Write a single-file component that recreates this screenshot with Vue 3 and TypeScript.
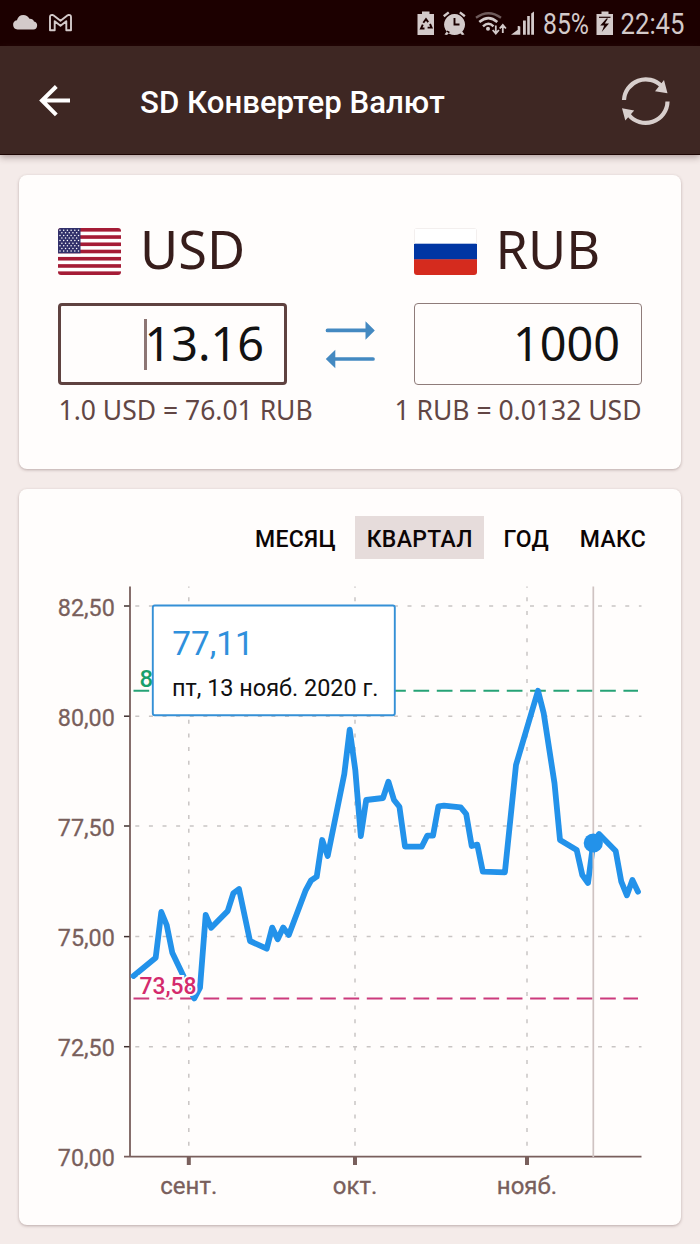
<script setup lang="ts">
interface Point {
  x: number
  y: number
}

const rates: [number, number][] = [
  [133.5, 976], [155.7, 957.7], [161.3, 912], [166.7, 925], [172.3, 952.7], [183.3, 975.7],
  [194.3, 998.5], [200, 987.7], [205.7, 915], [211.2, 927.8], [227.7, 911], [233.3, 893.3],
  [239, 889], [250, 941], [266.7, 948.7], [272.2, 927.6], [277.7, 939.3], [283.2, 927.6],
  [288.8, 935], [305.5, 890.7], [311, 880.5], [316.7, 876.7], [322.2, 840], [327.7, 856],
  [344.3, 774], [349.7, 729.7], [355.3, 770], [360.8, 836], [366.2, 800], [383, 798],
  [388.4, 781.7], [394, 800], [399.4, 806.7], [405, 846.7], [421.7, 846.7], [427.2, 835.7],
  [433, 835.7], [438.4, 806.3], [444, 805.6], [460.7, 807.3], [466.2, 814], [471.7, 846],
  [477.3, 844.6], [482.8, 871.7], [504.9, 872.3], [516, 765], [538, 690.7], [543.7, 713.3],
  [554.5, 783.3], [560, 840], [576.7, 850], [582.3, 875], [588, 883], [593.3, 843],
  [599, 834], [615.7, 851], [621.3, 881.7], [626.9, 895.3], [632.4, 880], [638, 891.7],
]
const linePoints = rates.map(([x, y]) => `${x},${y}`).join(' ')

const yTicks = [
  { label: '82,50', y: 606 },
  { label: '80,00', y: 716.2 },
  { label: '77,50', y: 826 },
  { label: '75,00', y: 936.6 },
  { label: '72,50', y: 1046.7 },
  { label: '70,00', y: 1156.7 },
]
const xTicks = [
  { label: 'сент.', x: 188.8 },
  { label: 'окт.', x: 355 },
  { label: 'нояб.', x: 527 },
]
const periods = [
  { label: 'МЕСЯЦ', cls: 'month' },
  { label: 'КВАРТАЛ', cls: 'quarter' },
  { label: 'ГОД', cls: 'year' },
  { label: 'МАКС', cls: 'max' },
]
const activePeriod = 'quarter'

const stripes = [0, 1, 2, 3, 4, 5, 6]
const stars: Point[] = []
for (let row = 0; row < 9; row++) {
  const count = row % 2 === 0 ? 6 : 5
  for (let i = 0; i < count; i++) {
    stars.push({ x: (row % 2 === 0 ? 2 : 3.85) + i * 3.7, y: 2.2 + row * 2.6 })
  }
}
</script>

<template>
  <div class="screen">
    <div class="status">
      <svg class="status-left" width="90" height="46" viewBox="0 0 90 46">
        <path d="M17.500 29.500a4.700 4.700 0 0 1-.6-9.300Q18.500 15 23.300 15Q27.500 15 29.500 18.800Q33 18.600 34 21.600a4 4 0 0 1-.6 7.900z" fill="#d3caca" />
        <path
          d="M50 17.200Q50 14.800 52.200 14.900L54 15.700L60.500 20.800L67 15.700L68.800 14.900Q71 14.800 71 17.200V30.300H66.300V21.200L60.500 25.700L54.700 21.200V30.300H50Z"
          fill="none" stroke="#d3caca" stroke-width="1.900" stroke-linejoin="round"
        />
      </svg>
      <svg class="status-right" width="290" height="46" viewBox="410 0 290 46">
        <g fill="#d3caca">
          <path d="M418 14h4v-2.500h7.500V14h4.500v21h-16.500V14z" />
          <path d="M454.500 14.100a10.500 10.500 0 1 0 .1 0zM443 15.200l5-3.700 1.500 1.800-5 4zM465.600 15.200l-5-3.700-1.500 1.800 5 4zM444.500 34.500l3-4 2.500 1.500-3 3zM464.500 34.500l-3-4-2.500 1.500 3 3z" />
          <circle cx="488" cy="28.700" r="2" />
          <path d="M511 34.700l7.500-5.500v5.500zM517.700 26h1.800v8.700h-1.800zM518.300 26.500h2v8.200h-2zM523 20.500h2.800v14.200h-2.800zM527.200 16h2.600v18.700h-2.600zM531.200 13.500l2.800-2v23.200h-2.800z" />
          <path d="M597 14h4.500v-2.500h7V14h4.500v21h-16.500V14z" />
        </g>
        <g fill="none" stroke="#1c0000" stroke-width="1.900">
          <path d="M454.500 18v6.500h5" />
          <path d="M423.300 22.800l2.700-3.600 2.200 2.900M430 24l1.600 3.600h-4M424.500 28.500h-3.500l1.800-3.800" />
          <path d="M599 17.300h11.500" stroke-width="1.200" />
        </g>
        <path d="M606.500 18.500l-6.300 7h4l-2.500 6.500 7.300-8.500h-4.200l3.200-5z" fill="#1c0000" />
        <g fill="none" stroke="#d3caca" stroke-width="2.500">
          <path d="M476 17.700q12.500-9 25 0" stroke="#6f5b5b" stroke-width="2.300" />
          <path d="M479.300 22q9.200-7.800 18 0" />
          <path d="M483 26.300q5.500-5 10.500 0" />
          <path d="M495.800 25.500v8M492.700 30l3.100 3.600 3.100-3.600M502.800 33v-8M499.700 28.500l3.100-3.600 3.100 3.600" stroke-width="1.800" />
        </g>
        <g class="status-text">
          <text x="543" y="34.300" textLength="46" lengthAdjust="spacingAndGlyphs">85%</text>
          <text x="620.500" y="34.300" textLength="64" lengthAdjust="spacingAndGlyphs">22:45</text>
        </g>
      </svg>
    </div>

    <header class="appbar">
      <svg class="back" width="34" height="34" viewBox="38 83.500 34 34">
        <path d="M70 101H42M56.300 87L42 101L56.300 115.300" fill="none" stroke="#fff" stroke-width="4" />
      </svg>
      <h1 class="title">SD Конвертер Валют</h1>
      <svg class="refresh" width="52" height="52" viewBox="620 74.500 52 52">
        <g fill="none" stroke="#d8cfcd" stroke-width="4.200">
          <path d="M624 100.500A21.800 21.800 0 0 1 661.500 86.500" />
          <path d="M667.500 102A21.800 21.800 0 0 1 628.500 115" />
        </g>
        <path d="M664 80.500L667.500 93.800L655 91.700zM622 108.700L634.200 111L625.300 121z" fill="#d8cfcd" />
      </svg>
    </header>

    <main class="content">
      <section class="card converter">
        <div class="fields">
          <div class="currency">
            <div class="name">
              <svg class="flag" width="63" height="47" viewBox="0 0 63 47">
                <rect width="63" height="47" fill="#fff" />
                <rect v-for="i in stripes" :key="i" x="0" :y="i * 7.230" width="63" height="3.620" fill="#a51c36" />
                <rect width="22.500" height="25.300" fill="#32316b" />
                <circle v-for="(s, i) in stars" :key="i" :cx="s.x" :cy="s.y" r="0.750" fill="#fff" />
              </svg>
              <span class="code">USD</span>
            </div>
            <div class="amount focused"><span class="caret"></span><span>13.16</span></div>
          </div>
          <svg class="swap" width="52" height="50" viewBox="324.500 320 52 50">
            <g stroke="#4489c1" stroke-width="3.700" stroke-linecap="round">
              <path d="M328 330.400H367M335 359H373.500" />
            </g>
            <path d="M366 321.300L375.300 330.400L366 339.700zM335.800 349.700L326.300 359L335.800 368.200z" fill="#4489c1" />
          </svg>
          <div class="currency">
            <div class="name">
              <svg class="flag" width="63" height="47" viewBox="0 0 63 47">
                <rect width="63" height="47" fill="#fff" />
                <rect y="15.700" width="63" height="16" fill="#0036a3" />
                <rect y="31.300" width="63" height="15.700" fill="#d52b1e" />
                <path d="M.5 15.700V.5H62.500V15.700" fill="none" stroke="#f3efee" />
              </svg>
              <span class="code">RUB</span>
            </div>
            <div class="amount"><span>1000</span></div>
          </div>
        </div>
        <div class="rates">
          <span>1.0 USD = 76.01 RUB</span>
          <span>1 RUB = 0.0132 USD</span>
        </div>
      </section>

      <section class="card history">
        <nav class="tabs">
          <button v-for="p in periods" :key="p.cls" class="tab" :class="[p.cls, { active: p.cls === activePeriod }]">
            {{ p.label }}
          </button>
        </nav>
        <svg class="chart" width="662" height="655" viewBox="19 570 662 655">
          <g stroke="#c9c5c4" stroke-width="1.500" fill="none">
            <path v-for="t in yTicks.slice(0, 5)" :key="t.y" :d="`M135.300 ${t.y}H641.500`" stroke-dasharray="4 9.610" />
            <path v-for="t in xTicks" :key="t.x" :d="`M${t.x} 586.500V1150`" stroke-dasharray="4 9.610" stroke-dashoffset="2.800" />
          </g>
          <g stroke="#795f5c" fill="none">
            <path d="M130 586.500V1157M124 1156.700H641.500" stroke-width="1.800" />
            <path v-for="t in xTicks" :key="t.x" :d="`M${t.x} 1156V1165`" stroke-width="4" />
          </g>
          <path v-for="t in yTicks.slice(0, 5)" :key="t.y" :d="`M124 ${t.y}H129.500`" stroke="#3f302f" stroke-width="1.500" />
          <g class="axis-label">
            <text v-for="t in yTicks" :key="t.y" x="114.800" :y="t.y + 9.600" text-anchor="end" textLength="57" lengthAdjust="spacingAndGlyphs">{{ t.label }}</text>
            <text v-for="t in xTicks" :key="t.x" :x="t.x" y="1193.500" text-anchor="middle">{{ t.label }}</text>
          </g>
          <path d="M133.500 690.700H638" stroke="#26a276" stroke-width="2" stroke-dasharray="15.700 7.630" />
          <path d="M133.500 998.400H638" stroke="#cc3a7c" stroke-width="2" stroke-dasharray="15.700 7.630" />
          <polyline :points="linePoints" fill="none" stroke="#2392ea" stroke-width="5.800" stroke-linecap="round" stroke-linejoin="round" />
          <path d="M593.300 586.500V1157" stroke="#cfc3c2" stroke-width="1.700" />
          <circle cx="593.300" cy="843" r="9.600" fill="#2392ea" />
          <text class="bound high" x="139.500" y="686.500">8</text>
          <text class="bound low" x="139.500" y="994" textLength="57" lengthAdjust="spacingAndGlyphs">73,58</text>
          <rect x="152.800" y="605.500" width="242" height="109.800" rx="2" fill="#fff" stroke="#3590d6" stroke-width="1.900" />
          <text class="tip-value" x="172.300" y="654.500" textLength="81.500" lengthAdjust="spacingAndGlyphs">77,11</text>
          <text class="tip-date" x="172" y="695.700" textLength="206.500" lengthAdjust="spacingAndGlyphs">пт, 13 нояб. 2020 г.</text>
        </svg>
      </section>
    </main>
  </div>
</template>

<style>
body {
  background: #f4ebe9;
}
</style>

<style scoped>
.screen {
  width: 700px;
  height: 1244px;
  overflow: hidden;
  background: #f4ebe9;
  font-family: Roboto, "Liberation Sans", sans-serif;
}
.status {
  display: flex;
  justify-content: space-between;
  height: 46px;
  background: #1c0000;
}
.status-text {
  font: 400 29px Roboto, sans-serif;
  fill: #d3caca;
}
.appbar {
  display: flex;
  align-items: center;
  box-sizing: border-box;
  height: 109px;
  padding: 0 28px 0 38px;
  background: #3e2723;
  border-bottom: 1px solid #1d0503;
  box-shadow: 0 2px 7px rgba(60, 30, 30, 0.4);
}
.title {
  flex: 1;
  margin: 5px 0 0 68px;
  font-size: 31.200px;
  line-height: 40px;
  font-weight: 500;
  color: #fff;
  white-space: nowrap;
}
.content {
  display: flex;
  flex-direction: column;
  gap: 20px;
  padding: 20px 19px 19px;
}
.card {
  box-sizing: border-box;
  border-radius: 8px;
  background: #fffdfc;
  box-shadow: 0 1px 3px rgba(80, 50, 50, 0.35);
}
.converter {
  height: 294px;
  padding: 53px 39.500px 0 39px;
}
.fields {
  display: flex;
  justify-content: space-between;
}
.currency {
  width: 228px;
}
.name {
  display: flex;
  height: 47px;
  align-items: center;
}
.flag {
  border-radius: 3px;
}
.code {
  margin: -5px 0 0 19px;
  font: 400 52.300px/60px "Noto Sans", sans-serif;
  color: #371d1b;
}
.amount {
  display: flex;
  justify-content: flex-end;
  align-items: center;
  box-sizing: border-box;
  height: 82px;
  margin-top: 28px;
  padding: 0 20.500px 3px 0;
  border: 1.500px solid #8f7c7a;
  border-width: 1.500px;
  border-radius: 4px;
  font: 400 46.800px/60px "Noto Sans", sans-serif;
  color: #121212;
}
.amount.focused {
  width: 229px;
  padding: 0 20px 3px 0;
  border: 3px solid #5f4240;
}
.caret {
  width: 3.500px;
  height: 51px;
  margin: 4px -3px 0 0;
  background: #8d7674;
}
.swap {
  margin-top: 92px;
}
.rates {
  display: flex;
  justify-content: space-between;
  margin: 10px 0 0 0.500px;
  font: 400 26.500px/31px "Noto Sans", sans-serif;
  color: #624644;
  white-space: nowrap;
}
.history {
  height: 736px;
}
.tabs {
  display: flex;
  justify-content: flex-end;
  gap: 8px;
  height: 81px;
  box-sizing: border-box;
  padding: 27px 24px 0 0;
}
.tab {
  height: 43px;
  padding: 3px 0 0 1px;
  border: 0;
  background: none;
  font: 500 23px/42px Roboto, sans-serif;
  letter-spacing: 0.300px;
  color: #0c0505;
}
.month { width: 104px; }
.quarter { width: 128.500px; }
.year { width: 68.500px; }
.max { width: 89px; }
.tab.active {
  background: #e6dcdb;
}
.chart {
  display: block;
}
.axis-label {
  font: 400 24px Roboto, sans-serif;
  fill: #795f5c;
  stroke: #795f5c;
  stroke-width: 0.300px;
}
.bound {
  font: 500 24px Roboto, sans-serif;
  stroke: #fffdfc;
  stroke-width: 4px;
  paint-order: stroke;
}
.high { fill: #17a06c; }
.low { fill: #d42a6c; }
.tip-value {
  font: 400 34px Roboto, sans-serif;
  fill: #2f90dc;
}
.tip-date {
  font: 400 23.500px Roboto, sans-serif;
  fill: #101010;
}
</style>
